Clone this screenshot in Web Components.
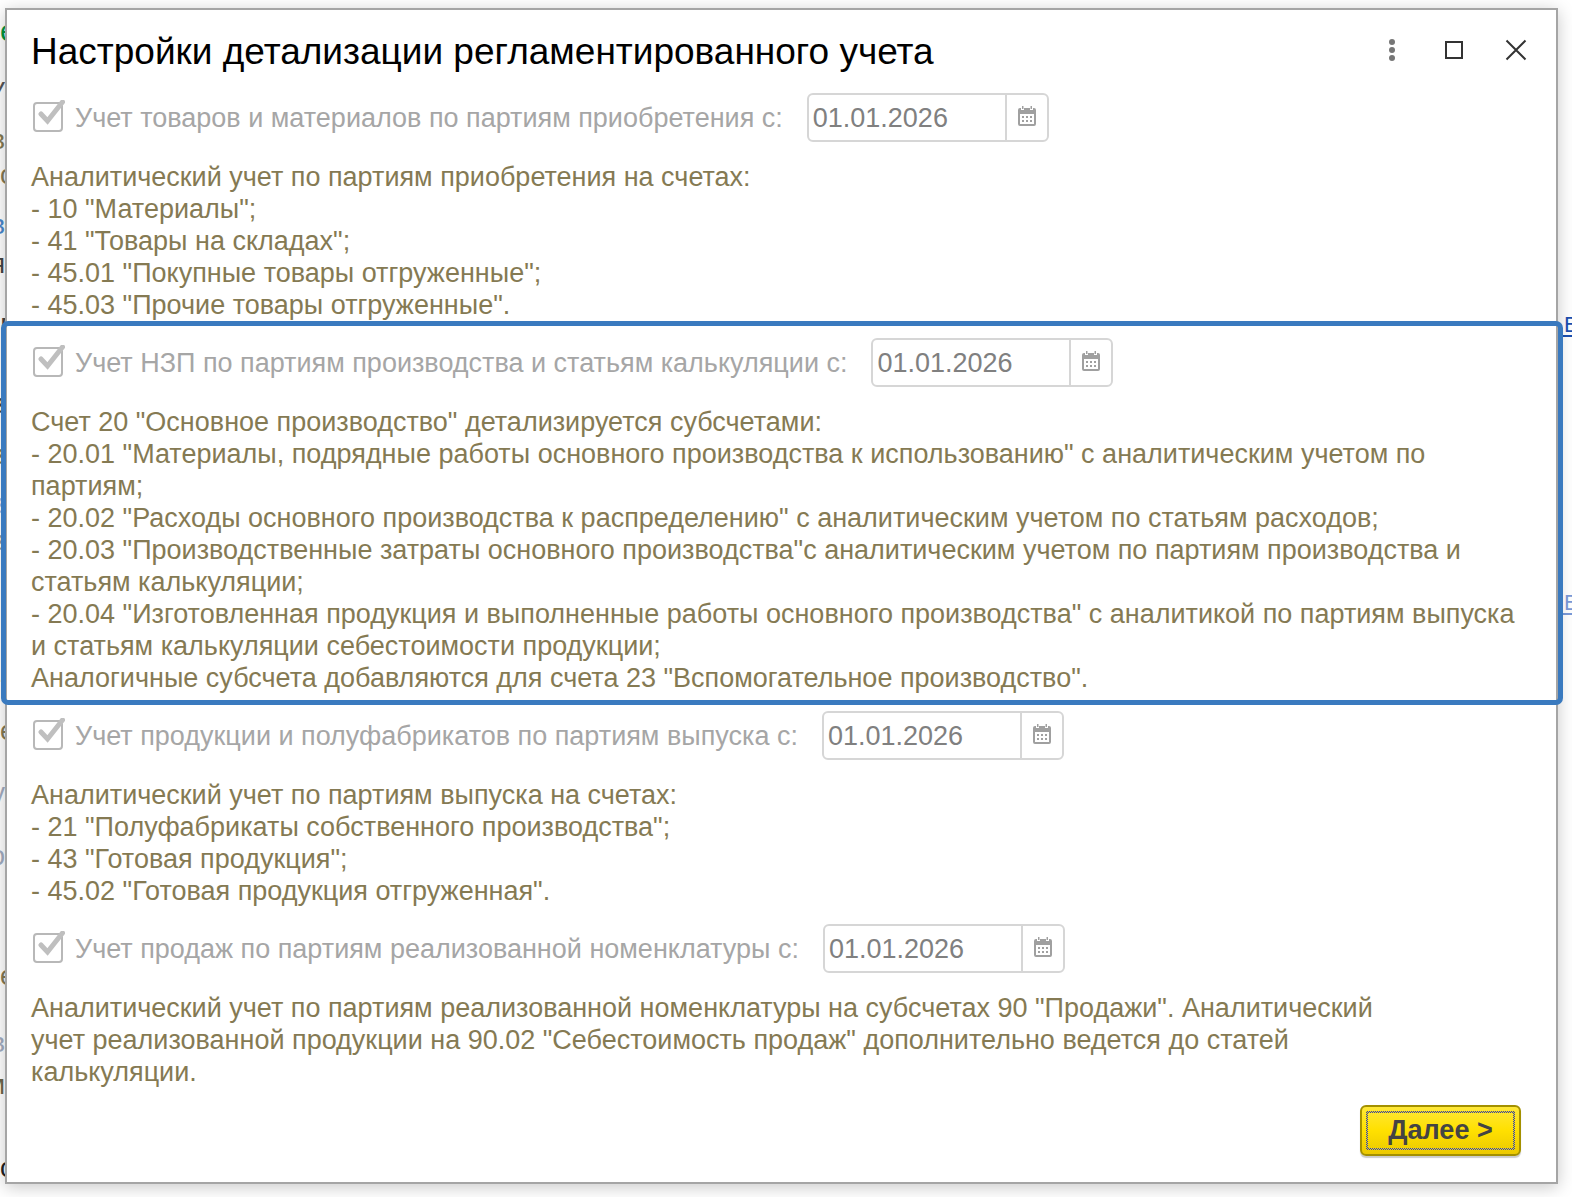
<!DOCTYPE html>
<html lang="ru">
<head>
<meta charset="utf-8">
<title>Настройки детализации регламентированного учета</title>
<style>
html, body { margin: 0; height: 100%; }
body { font-family: "Liberation Sans", Arial, sans-serif; font-size: 27px; line-height: 32px; background: #fff; color: #857a53; overflow: hidden; }
</style>
</head>
<body>
<app-desktop>
  <page-edge slot="left">
    <edge-text style="--h:61px;--c:#00963f;--s:30px">е</edge-text>
    <edge-text end style="--h:48px;--c:#555">У</edge-text>
    <edge-text end style="--h:35px">в</edge-text>
    <edge-text style="--h:50px">с</edge-text>
    <edge-text end style="--h:39px;--c:#4a86cc">в</edge-text>
    <edge-text end style="--h:64px;--c:#444">я</edge-text>
    <edge-text style="--h:76px;--c:#444">Б</edge-text>
    <edge-text end style="--h:51px;--c:#444">в</edge-text>
    <edge-text end style="--h:49px">в</edge-text>
    <edge-text end style="--h:37px;--c:#a9bde0">в</edge-text>
    <edge-text end style="--h:55px;--c:#999">в</edge-text>
    <edge-text style="--h:83px;--c:#a09a88">н</edge-text>
    <edge-text style="--h:52px;--c:#444">-</edge-text>
    <edge-text style="--h:62px">е</edge-text>
    <edge-text end style="--h:63px;--c:#a3acc0">у</edge-text>
    <edge-text end style="--h:120px;--c:#a3acc0">о</edge-text>
    <edge-text style="--h:67px">е</edge-text>
    <edge-text end style="--h:42px;--c:#a3acc0">в</edge-text>
    <edge-text end style="--h:83px;--c:#6f6547">м</edge-text>
    <edge-text style="--h:45px;--c:#222">с</edge-text>
  </page-edge>
  <page-edge slot="right">
    <edge-link style="--t:312px;--c:#1b4fb0">В</edge-link>
    <edge-link style="--t:253px;--c:#7b9ad8">В</edge-link>
  </page-edge>

  <settings-dialog>
    <dialog-header slot="header">Настройки детализации регламентированного учета</dialog-header>
    <setting-section label="Учет товаров и материалов по партиям приобретения с:" date="01.01.2026">
      Аналитический учет по партиям приобретения на счетах:<br>
      - 10 "Материалы";<br>
      - 41 "Товары на складах";<br>
      - 45.01 "Покупные товары отгруженные";<br>
      - 45.03 "Прочие товары отгруженные".
    </setting-section>
    <setting-section highlighted label="Учет НЗП по партиям производства и статьям калькуляции с:" date="01.01.2026">
      Счет 20 "Основное производство" детализируется субсчетами:<br>
      - 20.01 "Материалы, подрядные работы основного производства к использованию" с аналитическим учетом по партиям;<br>
      - 20.02 "Расходы основного производства к распределению" с аналитическим учетом по статьям расходов;<br>
      - 20.03 "Производственные затраты основного производства"с аналитическим учетом по партиям производства и статьям калькуляции;<br>
      - 20.04 "Изготовленная продукция и выполненные работы основного производства" с аналитикой по партиям выпуска и статьям калькуляции себестоимости продукции;<br>
      Аналогичные субсчета добавляются для счета 23 "Вспомогательное производство".
    </setting-section>
    <setting-section label="Учет продукции и полуфабрикатов по партиям выпуска с:" date="01.01.2026">
      Аналитический учет по партиям выпуска на счетах:<br>
      - 21 "Полуфабрикаты собственного производства";<br>
      - 43 "Готовая продукция";<br>
      - 45.02 "Готовая продукция отгруженная".
    </setting-section>
    <setting-section narrow label="Учет продаж по партиям реализованной номенклатуры с:" date="01.01.2026">
      Аналитический учет по партиям реализованной номенклатуры на субсчетах 90 "Продажи". Аналитический учет реализованной продукции на 90.02 "Себестоимость продаж" дополнительно ведется до статей калькуляции.
    </setting-section>
    <next-button slot="footer">Далее &gt;</next-button>
  </settings-dialog>
</app-desktop>

<script>
const define = (name, html, setup) => {
  const tpl = document.createElement('template');
  tpl.innerHTML = html;
  customElements.define(name, class extends HTMLElement {
    constructor() {
      super();
      this.attachShadow({ mode: 'open' }).append(tpl.content.cloneNode(true));
    }
    connectedCallback() { if (setup) setup(this, this.shadowRoot); }
  });
};

define('app-desktop', `
<style>
:host { display: grid; box-sizing: border-box; min-height: 100vh; padding: 8px 14px 13px 5px; position: relative; }
.behind { position: absolute; inset: 0; display: flex; justify-content: space-between; overflow: hidden; }
</style>
<div class="behind"><slot name="left"></slot><slot name="right"></slot></div>
<slot></slot>`);

define('page-edge', `
<style>:host { display: flex; flex-direction: column; padding-top: 15px; box-sizing: border-box; }
:host([slot="right"]) { padding-top: 0; }</style>
<slot></slot>`);

define('edge-text', `
<style>
:host { display: flex; flex: none; width: 5px; height: var(--h); overflow: hidden; color: var(--c, #857a53); font-size: var(--s, 27px); }
:host([end]) { justify-content: flex-end; }
</style>
<slot></slot>`);

define('edge-link', `
<style>
:host { display: block; margin-top: var(--t); }
a { display: block; width: 8px; height: 23px; padding-left: 6px; overflow: hidden; color: var(--c); font-size: 22px; line-height: 25px; text-decoration: none; border-bottom: 2px solid var(--c); }
</style>
<a href="#"><slot></slot></a>`);

define('settings-dialog', `
<style>
:host { display: flex; flex-direction: column; position: relative; box-sizing: border-box; background: #fff; border: 2px solid #a5a5a5; box-shadow: 0 3px 16px rgba(0,0,0,.22); padding: 0 35px 26px 24px; }
main { display: flex; flex-direction: column; gap: 17px; }
footer { display: flex; justify-content: flex-end; padding-top: 17px; margin-top: auto; }
</style>
<slot name="header"></slot>
<main><slot></slot></main>
<footer><slot name="footer"></slot></footer>`);

define('dialog-header', `
<style>
:host { display: flex; align-items: center; justify-content: space-between; height: 83px; color: #000; }
h1 { margin: 0; font-size: 37px; line-height: 44px; font-weight: 400; white-space: nowrap; }
nav { display: flex; gap: 22px; margin: 0 -15px 3px 0; }
button { width: 40px; height: 40px; padding: 0; border: 0; background: none; display: grid; place-items: center; }
svg { display: block; }
</style>
<h1><slot></slot></h1>
<nav>
<button aria-label="Ещё"><svg width="40" height="40"><g fill="#767676"><circle cx="20" cy="12" r="3"/><circle cx="20" cy="20" r="3"/><circle cx="20" cy="28" r="3"/></g></svg></button>
<button aria-label="Развернуть"><svg width="40" height="40"><rect x="12" y="12" width="16" height="16" fill="none" stroke="#333" stroke-width="2"/></svg></button>
<button aria-label="Закрыть"><svg width="40" height="40"><path d="M10.500 10.500L29.500 29.500M29.500 10.500L10.500 29.500" fill="none" stroke="#333" stroke-width="2"/></svg></button>
</nav>`);

define('date-field', `
<style>
:host { display: flex; box-sizing: border-box; width: 242px; height: 49px; border: 2px solid #d6d6d6; border-radius: 6px; overflow: hidden; background: #fff; }
input { flex: 1; min-width: 0; box-sizing: border-box; border: 0; padding: 0 4px; margin: 0; background: none; font: inherit; color: #808080; opacity: 1; }
button { width: 42px; box-sizing: border-box; padding: 0 0 3px; border: 0; border-left: 2px solid #d6d6d6; background: none; display: grid; place-items: center; }
svg { display: block; }
</style>
<input type="text" disabled aria-label="Дата начала">
<button disabled aria-label="Выбрать дату"><svg width="18" height="20" viewBox="0 0 18 20"><path fill="#a0a0a0" fill-rule="evenodd" d="M2 2H3V4H6V2H12V4H15V2H16Q18 2 18 4V18Q18 20 16 20H2Q0 20 0 18V4Q0 2 2 2ZM2 8V18H16V8Z"/><path fill="#a0a0a0" d="M4 0h1.500v3H4zM12.500 0H14v3h-1.500zM4 10h2v2H4zM8 10h2v2H8zM12 10h2v2h-2zM4 14h2v2H4zM8 14h2v2H8zM12 14h2v2h-2z"/></svg></button>`,
(el, root) => { root.querySelector('input').value = el.getAttribute('value'); });

define('setting-section', `
<style>
:host { display: block; position: relative; }
:host([highlighted])::after { content: ""; position: absolute; inset: -17px -42px -11px -30px; border: 5px solid #3a7abf; border-radius: 7px; pointer-events: none; }
.row { display: flex; align-items: center; gap: 24px; height: 49px; margin-bottom: 19px; }
label { display: flex; align-items: center; gap: 10px; color: #a6a6a6; white-space: nowrap; }
.box { display: grid; width: 34px; height: 35px; }
.box > * { grid-area: 1 / 1; }
input { appearance: none; box-sizing: border-box; width: 30px; height: 30px; margin: 2px; border: 2px solid #b8b8b8; border-radius: 4px; background: #fff; }
svg { position: relative; pointer-events: none; display: block; }
p { margin: 0; }
:host([narrow]) p { max-width: 1400px; }
</style>
<div class="row">
<label for="c"><span class="box"><input id="c" type="checkbox" checked disabled><svg width="34" height="34"><path d="M10 14L16.500 21L31.500 2" fill="none" stroke="#bfbfbf" stroke-width="5" stroke-linecap="round"/></svg></span><span class="text"></span></label>
<date-field></date-field>
</div>
<p><slot></slot></p>`,
(el, root) => {
  root.querySelector('.text').textContent = el.getAttribute('label');
  const d = root.querySelector('date-field');
  const i = d.shadowRoot && d.shadowRoot.querySelector('input');
  d.setAttribute('value', el.getAttribute('date'));
  if (i) i.value = el.getAttribute('date');
});

define('next-button', `
<style>
:host { display: block; }
button { display: block; box-sizing: border-box; width: 161px; height: 51px; padding: 4px; border: 2px solid #a39000; border-radius: 6px; background: linear-gradient(#ffe838, #ffe000 50%, #ecc900); box-shadow: 0 2px 1px #ccc; font: inherit; font-weight: 700; color: #444; }
.focus { display: block; padding: 2px; background: repeating-conic-gradient(#2438c8 0 25%, #ffe000 0 50%) 0 0 / 2px 2px; }
.face { display: block; height: 35px; line-height: 34px; background: linear-gradient(#ffe62a, #ffe000 50%, #f0cf00); }
</style>
<button><span class="focus"><span class="face"><slot></slot></span></span></button>`);
</script>
</body>
</html>
